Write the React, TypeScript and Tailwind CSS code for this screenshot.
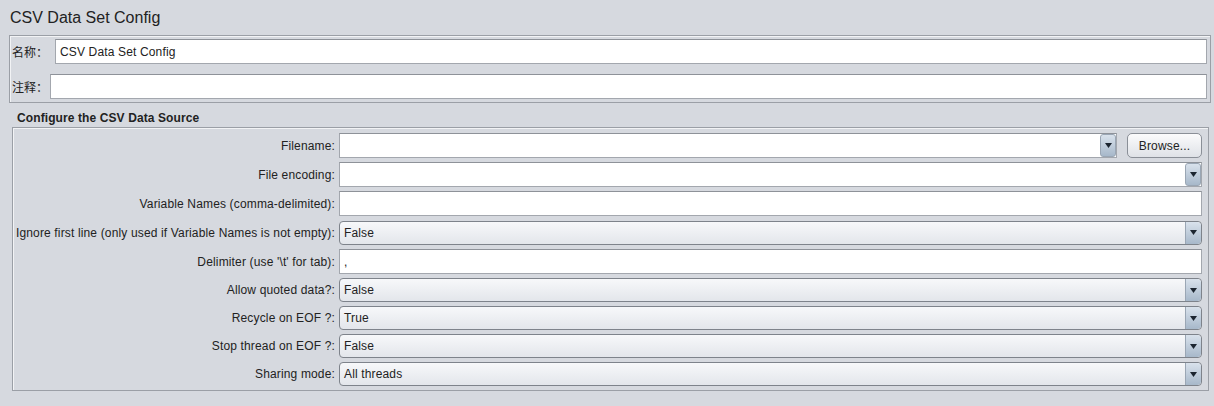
import React from "react";

const Arrow = ({ editable }: { editable?: boolean }) => (
  <div
    className={
      "flex h-full w-[16px] shrink-0 items-center justify-center border-l border-[#9aa6b4] bg-gradient-to-b from-[#d9e2ec] to-[#a7b8ca] " +
      (editable ? "rounded-[3px] border border-[#7f8a97]" : "rounded-r-[4px]")
    }
  >
    <svg width="7" height="5" viewBox="0 0 7 5">
      <path d="M0 0 L7 0 L3.5 5 Z" fill="#1c2530" />
    </svg>
  </div>
);

const TextField = ({ value }: { value?: string }) => (
  <div className="flex h-[25px] flex-1 items-center border border-[#a3a7ae] border-t-[#8e9299] bg-white pl-[4px] text-[12px] tracking-[0.15px] text-[#222]">
    {value}
  </div>
);

const EditCombo = () => (
  <div className="flex h-[25px] flex-1 items-stretch border border-[#a3a7ae] border-t-[#8e9299] bg-white">
    <div className="flex-1" />
    <Arrow editable />
  </div>
);

const Combo = ({ value }: { value: string }) => (
  <div className="flex h-[24px] flex-1 items-stretch overflow-hidden rounded-[4px] border border-[#7e838b] bg-gradient-to-b from-[#f7f8fa] to-[#e3e6eb]">
    <div className="flex flex-1 items-center pl-[4px] text-[12px] tracking-[0.15px] text-[#222]">{value}</div>
    <Arrow />
  </div>
);

const Row = ({ label, h, children }: { label: string; h: number; children: React.ReactNode }) => (
  <div className={"flex items-center gap-[4px] " + (h === 29 ? "h-[29px]" : "h-[28px]")}>
    <div className="w-[322px] shrink-0 whitespace-nowrap text-right text-[12px] tracking-[0.15px] text-[#222]">{label}</div>
    <div className="flex flex-1 items-center">{children}</div>
  </div>
);

export default function App() {
  return (
    <div
      className="h-[406px] w-[1214px] overflow-hidden bg-[#d6d9df]"
      style={{ fontFamily: '"Liberation Sans", Arial, "Noto Sans CJK SC", sans-serif' }}
    >
      <div className="mb-[7px] pl-[10px] pt-[8px] text-[16px] leading-[20px] text-[#222]">CSV Data Set Config</div>

      <div className="ml-[9px] flex w-[1202px] flex-col gap-[10px] border border-[#9b9fa6] pb-[3px] pl-[2px] pr-[3px] pt-[3px] shadow-[inset_1px_1px_0_#f2f3f5]">
        <div className="flex items-center">
          <div className="w-[43px] shrink-0 text-[12px] text-[#222]" style={{ fontFamily: '"Noto Sans CJK SC", sans-serif' }}>
            名称：
          </div>
          <TextField value="CSV Data Set Config" />
        </div>
        <div className="flex items-center">
          <div className="w-[38px] shrink-0 text-[12px] text-[#222]" style={{ fontFamily: '"Noto Sans CJK SC", sans-serif' }}>
            注释：
          </div>
          <TextField />
        </div>
      </div>

      <div className="mt-[8px] pl-[17px] text-[12px] font-bold leading-[14px] tracking-[0.1px] text-[#222]">Configure the CSV Data Source</div>

      <div className="ml-[12px] mt-[2px] flex w-[1197px] flex-col border border-[#9b9fa6] pb-[2px] pr-[6px] pt-[3px] shadow-[inset_1px_1px_0_#f2f3f5]">
        <Row label="Filename:" h={29}>
          <EditCombo />
          <div className="ml-[10px] flex h-[25px] w-[75px] items-center justify-center rounded-[5px] border border-[#8a8f97] bg-gradient-to-b from-[#fbfbfc] to-[#dfe2e7] text-[12px] tracking-[0.15px] text-[#222]">
            Browse...
          </div>
        </Row>
        <Row label="File encoding:" h={29}>
          <EditCombo />
        </Row>
        <Row label="Variable Names (comma-delimited):" h={29}>
          <TextField />
        </Row>
        <Row label="Ignore first line (only used if Variable Names is not empty):" h={29}>
          <Combo value="False" />
        </Row>
        <Row label="Delimiter (use '\t' for tab):" h={29}>
          <TextField value="," />
        </Row>
        <Row label="Allow quoted data?:" h={28}>
          <Combo value="False" />
        </Row>
        <Row label="Recycle on EOF ?:" h={28}>
          <Combo value="True" />
        </Row>
        <Row label="Stop thread on EOF ?:" h={28}>
          <Combo value="False" />
        </Row>
        <Row label="Sharing mode:" h={28}>
          <Combo value="All threads" />
        </Row>
      </div>
    </div>
  );
}
